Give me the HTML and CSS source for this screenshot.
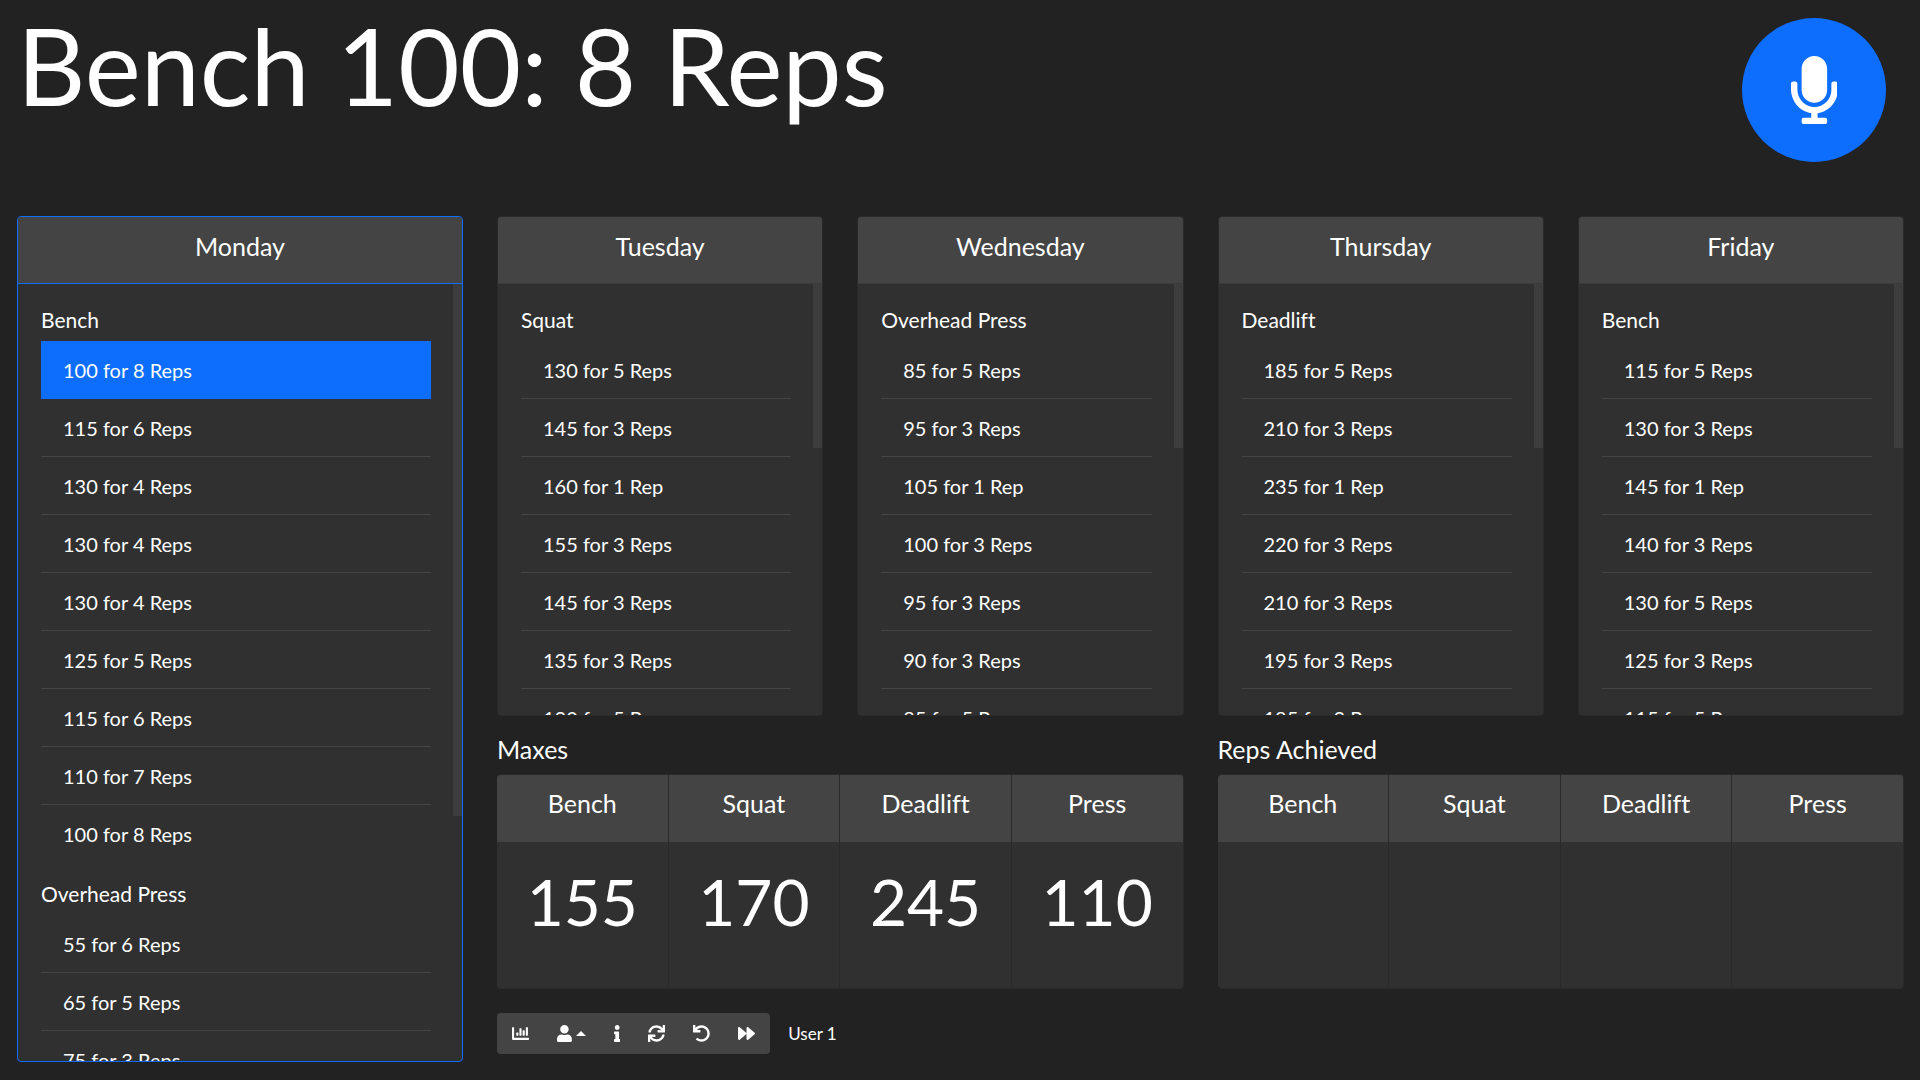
FILE: index.html
```html
<!DOCTYPE html>
<html lang="en">
<head>
<meta charset="utf-8">
<title>Workout</title>
<link rel="stylesheet" href="styles.css">
</head>
<body>
<header class="top">
  <h1 class="current">Bench 100: 8 Reps</h1>
  <button class="mic" type="button" aria-label="Voice control">
    <svg viewBox="0 0 352 512" aria-hidden="true"><path d="M176 352c53.02 0 96-42.98 96-96V96c0-53.02-42.98-96-96-96S80 42.98 80 96v160c0 53.02 42.98 96 96 96zm160-160h-16c-8.84 0-16 7.16-16 16v48c0 74.8-64.49 134.82-140.79 127.38C96.71 376.89 48 317.11 48 250.3V208c0-8.84-7.16-16-16-16H16c-8.84 0-16 7.16-16 16v40.16c0 89.64 63.97 169.55 152 181.69V464H96c-8.84 0-16 7.16-16 16v16c0 8.84 7.16 16 16 16h160c8.84 0 16-7.16 16-16v-16c0-8.84-7.16-16-16-16h-56v-33.77C285.71 418.47 352 344.9 352 256v-48c0-8.84-7.16-16-16-16z"/></svg>
  </button>
</header>
<main class="board">
  <section class="card card-active today">
    <h2 class="card-header">Monday</h2>
    <div class="card-body">
      <div class="lifts">
        <h3 class="lift">Bench</h3>
        <ul class="sets">
          <li class="active">100 for 8 Reps</li>
          <li>115 for 6 Reps</li>
          <li>130 for 4 Reps</li>
          <li>130 for 4 Reps</li>
          <li>130 for 4 Reps</li>
          <li>125 for 5 Reps</li>
          <li>115 for 6 Reps</li>
          <li>110 for 7 Reps</li>
          <li>100 for 8 Reps</li>
        </ul>
        <h3 class="lift">Overhead Press</h3>
        <ul class="sets">
          <li>55 for 6 Reps</li>
          <li>65 for 5 Reps</li>
          <li>75 for 3 Reps</li>
        </ul>
      </div>
      <div class="thumb thumb-long"></div>
    </div>
  </section>
  <div class="side">
    <div class="week">
      <section class="card">
        <h2 class="card-header">Tuesday</h2>
        <div class="card-body">
          <div class="lifts">
            <h3 class="lift">Squat</h3>
            <ul class="sets">
              <li>130 for 5 Reps</li>
              <li>145 for 3 Reps</li>
              <li>160 for 1 Rep</li>
              <li>155 for 3 Reps</li>
              <li>145 for 3 Reps</li>
              <li>135 for 3 Reps</li>
              <li>130 for 5 Reps</li>
            </ul>
          </div>
          <div class="thumb"></div>
        </div>
      </section>
      <section class="card">
        <h2 class="card-header">Wednesday</h2>
        <div class="card-body">
          <div class="lifts">
            <h3 class="lift">Overhead Press</h3>
            <ul class="sets">
              <li>85 for 5 Reps</li>
              <li>95 for 3 Reps</li>
              <li>105 for 1 Rep</li>
              <li>100 for 3 Reps</li>
              <li>95 for 3 Reps</li>
              <li>90 for 3 Reps</li>
              <li>85 for 5 Reps</li>
            </ul>
          </div>
          <div class="thumb"></div>
        </div>
      </section>
      <section class="card">
        <h2 class="card-header">Thursday</h2>
        <div class="card-body">
          <div class="lifts">
            <h3 class="lift">Deadlift</h3>
            <ul class="sets">
              <li>185 for 5 Reps</li>
              <li>210 for 3 Reps</li>
              <li>235 for 1 Rep</li>
              <li>220 for 3 Reps</li>
              <li>210 for 3 Reps</li>
              <li>195 for 3 Reps</li>
              <li>185 for 3 Reps</li>
            </ul>
          </div>
          <div class="thumb"></div>
        </div>
      </section>
      <section class="card">
        <h2 class="card-header">Friday</h2>
        <div class="card-body">
          <div class="lifts">
            <h3 class="lift">Bench</h3>
            <ul class="sets">
              <li>115 for 5 Reps</li>
              <li>130 for 3 Reps</li>
              <li>145 for 1 Rep</li>
              <li>140 for 3 Reps</li>
              <li>130 for 5 Reps</li>
              <li>125 for 3 Reps</li>
              <li>115 for 5 Reps</li>
            </ul>
          </div>
          <div class="thumb"></div>
        </div>
      </section>
    </div>
    <div class="totals">
      <table class="stats">
        <caption>Maxes</caption>
        <thead><tr><th scope="col">Bench</th><th scope="col">Squat</th><th scope="col">Deadlift</th><th scope="col">Press</th></tr></thead>
        <tbody><tr><td>155</td><td>170</td><td>245</td><td>110</td></tr></tbody>
      </table>
      <table class="stats">
        <caption>Reps Achieved</caption>
        <thead><tr><th scope="col">Bench</th><th scope="col">Squat</th><th scope="col">Deadlift</th><th scope="col">Press</th></tr></thead>
        <tbody><tr><td></td><td></td><td></td><td></td></tr></tbody>
      </table>
    </div>
    <footer class="tools">
      <div class="toolbar">
        <button type="button" aria-label="Statistics"><svg viewBox="0 0 512 512" aria-hidden="true"><path d="M332.8 320h38.4c6.4 0 12.8-6.4 12.8-12.8V172.8c0-6.4-6.4-12.8-12.8-12.8h-38.4c-6.4 0-12.8 6.4-12.8 12.8v134.4c0 6.4 6.4 12.8 12.8 12.8zm96 0h38.4c6.4 0 12.8-6.4 12.8-12.8V76.8c0-6.4-6.4-12.8-12.8-12.8h-38.4c-6.4 0-12.8 6.4-12.8 12.8v230.4c0 6.4 6.4 12.8 12.8 12.8zm-288 0h38.4c6.4 0 12.8-6.4 12.8-12.8v-70.4c0-6.4-6.4-12.8-12.8-12.8h-38.4c-6.4 0-12.8 6.4-12.8 12.8v70.4c0 6.4 6.4 12.8 12.8 12.8zm96 0h38.4c6.4 0 12.8-6.4 12.8-12.8V108.8c0-6.4-6.4-12.8-12.8-12.8h-38.4c-6.4 0-12.8 6.4-12.8 12.8v198.4c0 6.4 6.4 12.8 12.8 12.8zM496 384H64V80c0-8.84-7.16-16-16-16H16C7.16 64 0 71.16 0 80v336c0 17.67 14.33 32 32 32h464c8.84 0 16-7.16 16-16v-32c0-8.84-7.16-16-16-16z"/></svg></button>
        <button type="button" aria-label="User"><svg viewBox="0 0 448 512" aria-hidden="true"><path d="M224 256c70.7 0 128-57.3 128-128S294.7 0 224 0 96 57.3 96 128s57.3 128 128 128zm89.6 32h-16.7c-22.2 10.2-46.9 16-72.9 16s-50.6-5.8-72.9-16h-16.7C60.2 288 0 348.2 0 422.4V464c0 26.5 21.5 48 48 48h352c26.5 0 48-21.5 48-48v-41.6c0-74.2-60.2-134.4-134.4-134.4z"/></svg><span class="caret"></span></button>
        <button type="button" aria-label="Information"><svg viewBox="0 0 192 512" aria-hidden="true"><path d="M20 424.229h20V279.771H20c-11.046 0-20-8.954-20-20V212c0-11.046 8.954-20 20-20h112c11.046 0 20 8.954 20 20v212.229h20c11.046 0 20 8.954 20 20V492c0 11.046-8.954 20-20 20H20c-11.046 0-20-8.954-20-20v-47.771c0-11.046 8.954-20 20-20zM96 0C56.235 0 24 32.235 24 72s32.235 72 72 72 72-32.235 72-72S135.764 0 96 0z"/></svg></button>
        <button type="button" aria-label="Refresh"><svg viewBox="0 0 512 512" aria-hidden="true"><path d="M440.65 12.57l4 82.77A247.16 247.16 0 0 0 255.83 8C134.73 8 33.91 94.92 12.29 209.82A12 12 0 0 0 24.09 224h49.05a12 12 0 0 0 11.67-9.26 175.91 175.91 0 0 1 317-56.94l-101.46-4.86a12 12 0 0 0-12.57 12v47.41a12 12 0 0 0 12 12H500a12 12 0 0 0 12-12V12a12 12 0 0 0-12-12h-47.37a12 12 0 0 0-11.98 12.57zM255.83 432a175.61 175.61 0 0 1-146-77.8l101.8 4.87a12 12 0 0 0 12.57-12v-47.4a12 12 0 0 0-12-12H12a12 12 0 0 0-12 12V500a12 12 0 0 0 12 12h47.35a12 12 0 0 0 12-12.6l-4.15-82.57A247.17 247.17 0 0 0 255.83 504c121.11 0 221.93-86.92 243.55-201.82a12 12 0 0 0-11.8-14.18h-49.05a12 12 0 0 0-11.67 9.26A175.86 175.86 0 0 1 255.83 432z"/></svg></button>
        <button type="button" aria-label="Undo"><svg viewBox="0 0 512 512" aria-hidden="true"><path d="M212.333 224.333H12c-6.627 0-12-5.373-12-12V12C0 5.373 5.373 0 12 0h48c6.627 0 12 5.373 12 12v78.112C117.773 39.279 184.26 7.47 258.175 8.007c136.906.994 246.448 111.623 246.157 248.532C504.041 393.258 393.12 504 256.333 504c-64.089 0-122.496-24.313-166.51-64.215-5.099-4.622-5.334-12.554-.467-17.42l33.967-33.967c4.474-4.474 11.662-4.717 16.401-.525C170.76 415.336 211.58 432 256.333 432c97.268 0 176-78.716 176-176 0-97.267-78.716-176-176-176-58.496 0-110.28 28.476-142.274 72.333h98.274c6.627 0 12 5.373 12 12v48c0 6.627-5.373 12-12 12z"/></svg></button>
        <button type="button" aria-label="Next"><svg viewBox="0 0 512 512" aria-hidden="true"><path d="M500.5 231.4l-192-160C287.9 54.3 256 68.6 256 96v320c0 27.4 31.9 41.8 52.5 24.6l192-160c15.3-12.8 15.3-36.4 0-49.2zm-256 0l-192-160C31.9 54.3 0 68.6 0 96v320c0 27.4 31.9 41.8 52.5 24.6l192-160c15.3-12.8 15.3-36.4 0-49.2z"/></svg></button>
      </div>
      <span class="user">User 1</span>
    </footer>
  </div>
</main>
</body>
</html>
```
FILE: styles.css
```css
* { box-sizing: border-box; }
body { margin: 0; height: 100vh; display: flex; flex-direction: column; background: #222; color: #fff; font: 20px/30px Lato, sans-serif; font-variant-ligatures: none; }
h1, h2, h3, ul { margin: 0; padding: 0; font-weight: 400; }
button { border: 0; padding: 0; color: inherit; font: inherit; }
svg { fill: currentColor; }
.top { height: 198px; flex: none; display: flex; justify-content: space-between; align-items: flex-start; padding: 0 34px 0 17px; }
.current { font-size: 106px; line-height: 130px; }
.mic { width: 144px; height: 144px; margin-top: 18px; border-radius: 50%; background: #0d6efd; display: flex; align-items: center; justify-content: center; }
.mic svg { height: 68px; }
.board { flex: 1; min-height: 0; display: flex; padding: 18px 0; }
.today { flex: 0 0 calc(25% - 34px); margin: 0 17px; }
.side { flex: 1; min-width: 0; display: flex; flex-direction: column; padding: 0 16px 0 17px; }
.week { flex: 1; min-height: 0; display: grid; grid-template-columns: repeat(4, 1fr); grid-template-rows: 100%; gap: 34px; }
.card { display: flex; flex-direction: column; min-width: 0; overflow: hidden; border: 1px solid #2a2a2a; border-radius: 4px; background: #303030; }
.card-header { flex: none; height: 67px; padding-top: 13px; border-bottom: 1px solid #3b3b3b; background: #444; font-size: 25px; line-height: 32px; text-align: center; }
.card-active, .card-active .card-header { border-color: #0d6efd; }
.card-body { flex: 1; min-height: 0; display: flex; }
.lifts { flex: 1; padding: 23px 22px 23px 23px; }
.lift { font-size: 21px; line-height: 26px; margin-bottom: 8px; }
.sets { list-style: none; margin-bottom: 18px; }
.sets li { height: 58px; padding: 14px 22px; border-bottom: 1px solid #444; }
.sets li:last-child { border-bottom: 0; }
.sets .active { background: #0d6efd; border-color: #0d6efd; }
.thumb { width: 9px; height: 38%; background: #3d3d3d; }
.thumb-long { height: 532px; }
.totals { display: grid; grid-template-columns: 1fr 1fr; gap: 34px; margin-top: 17px; }
.stats { width: 100%; table-layout: fixed; border-spacing: 0; }
.stats caption { font-size: 25px; line-height: 32px; text-align: left; padding-bottom: 9px; }
.stats th, .stats td { padding: 0; border: 0 solid #2a2a2a; border-right-width: 1px; text-align: center; font-weight: 400; }
.stats th { height: 68px; padding-bottom: 12px; background: #444; border-top-width: 1px; font-size: 25px; }
.stats td { height: 147px; padding-bottom: 26px; background: #303030; border-bottom-width: 1px; font-size: 64px; line-height: 80px; }
.stats th:first-child { border-top-left-radius: 4px; }
.stats th:last-child { border-top-right-radius: 4px; }
.stats td:first-child { border-bottom-left-radius: 4px; }
.stats td:last-child { border-bottom-right-radius: 4px; }
.tools { display: flex; align-items: center; gap: 18px; margin: 24px 0 8px; font-size: 17px; }
.toolbar { display: flex; height: 41px; padding: 0 1px; border-radius: 4px; background: #444; }
.toolbar button { padding: 0 14px; background: none; display: flex; align-items: center; }
.toolbar svg { height: 17px; }
.caret { margin-left: 4px; border: 5px solid transparent; border-top: 0; border-bottom-color: #fff; }
```
